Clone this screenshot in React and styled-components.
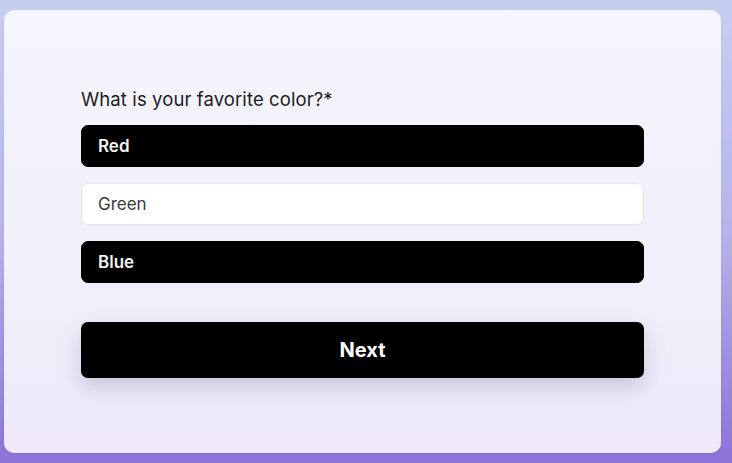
import React, { useState } from 'react'
import styled, { createGlobalStyle } from 'styled-components'

const GlobalStyle = createGlobalStyle`
  html, body {
    margin: 0;
    padding: 0;
    height: 100%;
  }
  body {
    font-family: Inter, "Noto Sans", sans-serif;
    background: linear-gradient(180deg, #c6cff0 0%, #b7b3ea 50%, #8b72d9 100%);
  }
`

const Page = styled.div`
  width: 732px;
  height: 463px;
  box-sizing: border-box;
  padding: 10px 11px 10px 4px;
  display: flex;
`

const Card = styled.div`
  flex: 1;
  border-radius: 10px;
  background: linear-gradient(180deg, #f5f5fd 0%, #f1f0fb 55%, #efe9fa 100%);
  box-shadow: 0 1px 3px rgba(60, 50, 120, 0.08);
  padding: 77px 77px 0 77px;
  box-sizing: border-box;
`

const Question = styled.div`
  font-size: 18.5px;
  line-height: 24px;
  color: #1c1c22;
  letter-spacing: 0.1px;
  margin-bottom: 14px;
`

const Options = styled.div`
  display: flex;
  flex-direction: column;
  gap: 16px;
`

const Option = styled.button`
  height: 42px;
  box-sizing: border-box;
  border-radius: 7px;
  padding: 0 16px;
  text-align: left;
  font-family: inherit;
  font-size: 17px;
  cursor: pointer;
  background: ${p => (p.$selected ? '#000' : '#fff')};
  color: ${p => (p.$selected ? '#f2f2f2' : '#3a3a42')};
  font-weight: ${p => (p.$selected ? 600 : 400)};
  border: 1px solid ${p => (p.$selected ? '#000' : '#e4e3ee')};
`

const NextButton = styled.button`
  margin-top: 39px;
  width: 100%;
  height: 56px;
  border: none;
  border-radius: 7px;
  background: #000;
  color: #fff;
  font-family: inherit;
  font-size: 20px;
  font-weight: 700;
  cursor: pointer;
  box-shadow: 0 10px 22px rgba(40, 30, 80, 0.18);
`

const choices = ['Red', 'Green', 'Blue']

export default function App() {
  const [selected, setSelected] = useState(['Red', 'Blue'])
  const toggle = c =>
    setSelected(s => (s.includes(c) ? s.filter(x => x !== c) : [...s, c]))

  return (
    <Page>
      <GlobalStyle />
      <Card>
        <Question>What is your favorite color?*</Question>
        <Options>
          {choices.map(c => (
            <Option key={c} $selected={selected.includes(c)} onClick={() => toggle(c)}>
              {c}
            </Option>
          ))}
        </Options>
        <NextButton>Next</NextButton>
      </Card>
    </Page>
  )
}
